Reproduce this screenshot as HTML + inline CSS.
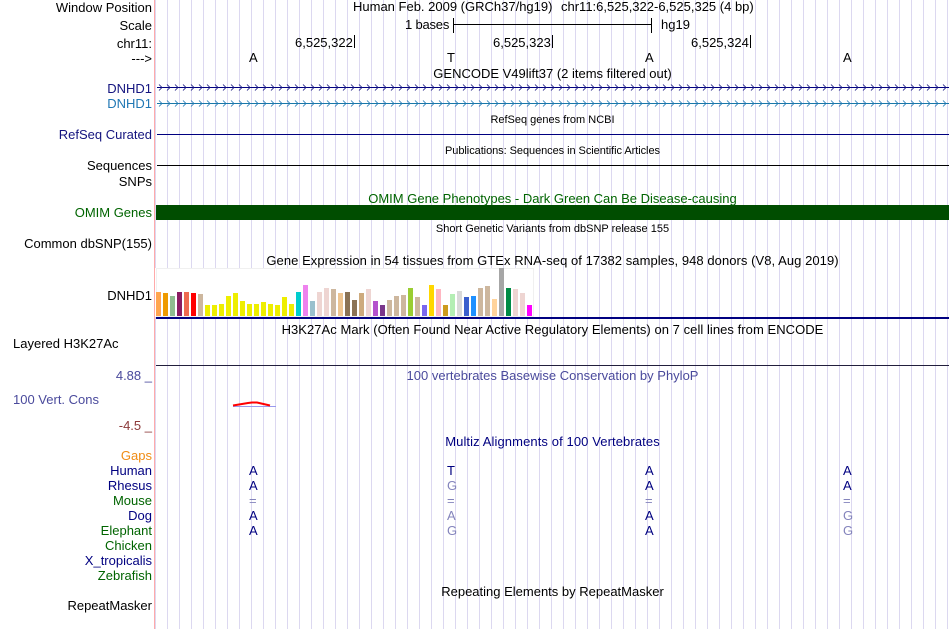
<!DOCTYPE html>
<html><head><meta charset="utf-8"><style>
html,body{margin:0;padding:0;background:#fff;width:950px;height:629px;overflow:hidden}
body{position:relative;font-family:"Liberation Sans",sans-serif;font-size:13px;color:#000}
.t{position:absolute;line-height:14px;white-space:pre}
.l{position:absolute;left:0;width:152px;text-align:right;line-height:14px;white-space:pre}
.c{position:absolute;left:155px;width:795px;text-align:center;line-height:14px;white-space:pre}
.s{font-size:11px}
.b{position:absolute;width:5px;bottom:313px}
.n{color:#000080}.lb{color:#8484bc}
svg{position:absolute;left:0;top:0}
</style></head><body>
<svg width="950" height="629" viewBox="0 0 950 629">
<defs>
<pattern id="v" x="167" y="0" width="12" height="629" patternUnits="userSpaceOnUse"><rect x="0" y="0" width="1" height="629" fill="#dcd8f0"/></pattern>
<pattern id="ch1" x="158" y="83.500" width="8" height="8" patternUnits="userSpaceOnUse"><path d="M1 1 L4 4 L1 7" fill="none" stroke="#14147f" stroke-width="0.800"/></pattern>
<pattern id="ch2" x="158" y="99.500" width="8" height="8" patternUnits="userSpaceOnUse"><path d="M1 1 L4 4 L1 7" fill="none" stroke="#1f77b4" stroke-width="0.800"/></pattern>
</defs>
<rect x="155" y="0" width="794" height="629" fill="url(#v)"/>
<rect x="154" y="0" width="1" height="629" fill="#ffaaaa"/>
<rect x="155" y="268" width="379" height="49" fill="#fff"/>
<rect x="156.500" y="268.500" width="377" height="48" fill="none" stroke="#f0f0f0"/>
<rect x="157" y="87" width="792" height="1" fill="#000080"/>
<rect x="158" y="84" width="791" height="7" fill="url(#ch1)"/>
<rect x="157" y="103" width="792" height="1" fill="#1878a8"/>
<rect x="158" y="100" width="791" height="7" fill="url(#ch2)"/>
<rect x="157" y="134" width="792" height="1" fill="#000080"/>
<rect x="157" y="165" width="792" height="1" fill="#000"/>
<rect x="156" y="205" width="793" height="15" fill="#004d00"/>
<rect x="156" y="317" width="793" height="2" fill="#000080"/>
<rect x="156" y="365" width="793" height="1" fill="#221f3c"/>
<rect x="354" y="35" width="1" height="13" fill="#000"/>
<rect x="552" y="35" width="1" height="13" fill="#000"/>
<rect x="750" y="35" width="1" height="13" fill="#000"/>
<rect x="453" y="18" width="1" height="15" fill="#000"/>
<rect x="651" y="18" width="1" height="15" fill="#000"/>
<rect x="453" y="24" width="198" height="1" fill="#000"/>
<rect x="233" y="406" width="43" height="1" fill="#9a9aee"/>
<path d="M233 405.500 L248 403 L252 402.500 L257 402.500 L270 405.500" fill="none" stroke="#f00" stroke-width="2"/>
</svg>

<div class="l" style="top:1px">Window Position</div>
<div class="l" style="top:19px">Scale</div>
<div class="l" style="top:37px">chr11:</div>
<div class="l" style="top:52px">---&gt;</div>
<div class="l" style="top:82px;color:#14147f">DNHD1</div>
<div class="l" style="top:97px;color:#1f77b4">DNHD1</div>
<div class="l" style="top:128px;color:#14147f">RefSeq Curated</div>
<div class="l" style="top:159px">Sequences</div>
<div class="l" style="top:175px">SNPs</div>
<div class="l" style="top:206px;color:#006400">OMIM Genes</div>
<div class="l" style="top:237px">Common dbSNP(155)</div>
<div class="l" style="top:289px">DNHD1</div>
<div class="t" style="left:13px;top:337px">Layered H3K27Ac</div>
<div class="l" style="top:369px;color:#4a4a9c">4.88 _</div>
<div class="t" style="left:13px;top:393px;color:#4a4a9c">100 Vert. Cons</div>
<div class="l" style="top:419px;color:#8c3a3a">-4.5 _</div>
<div class="l" style="top:449px;color:#f08c14">Gaps</div>
<div class="l n" style="top:464px">Human</div>
<div class="l n" style="top:479px">Rhesus</div>
<div class="l" style="top:494px;color:#006400">Mouse</div>
<div class="l n" style="top:509px">Dog</div>
<div class="l" style="top:524px;color:#006400">Elephant</div>
<div class="l" style="top:539px;color:#006400">Chicken</div>
<div class="l n" style="top:554px">X_tropicalis</div>
<div class="l" style="top:569px;color:#006400">Zebrafish</div>
<div class="l" style="top:599px">RepeatMasker</div>

<div class="t" style="left:353px;top:0">Human Feb. 2009 (GRCh37/hg19)</div>
<div class="t" style="left:561px;top:0">chr11:6,525,322-6,525,325 (4 bp)</div>
<div class="t" style="left:405px;top:18px;letter-spacing:-.2px">1 bases</div>
<div class="t" style="left:661px;top:18px">hg19</div>
<div class="t" style="left:295px;top:36px">6,525,322</div>
<div class="t" style="left:493px;top:36px">6,525,323</div>
<div class="t" style="left:691px;top:36px">6,525,324</div>
<div class="t" style="left:249px;top:51px">A</div>
<div class="t" style="left:447px;top:51px">T</div>
<div class="t" style="left:645px;top:51px">A</div>
<div class="t" style="left:843px;top:51px">A</div>
<div class="c" style="top:67px">GENCODE V49lift37 (2 items filtered out)</div>
<div class="c s" style="top:113px">RefSeq genes from NCBI</div>
<div class="c s" style="top:144px;letter-spacing:-.06px">Publications: Sequences in Scientific Articles</div>
<div class="c" style="top:192px;color:#006400">OMIM Gene Phenotypes - Dark Green Can Be Disease-causing</div>
<div class="c s" style="top:222px">Short Genetic Variants from dbSNP release 155</div>
<div class="c" style="top:254px;letter-spacing:.055px">Gene Expression in 54 tissues from GTEx RNA-seq of 17382 samples, 948 donors (V8, Aug 2019)</div>
<div class="c" style="top:323px;letter-spacing:.05px">H3K27Ac Mark (Often Found Near Active Regulatory Elements) on 7 cell lines from ENCODE</div>
<div class="c" style="top:369px;color:#4a4a9c">100 vertebrates Basewise Conservation by PhyloP</div>
<div class="c n" style="top:435px;letter-spacing:.1px">Multiz Alignments of 100 Vertebrates</div>
<div class="c" style="top:585px">Repeating Elements by RepeatMasker</div>

<div class="t n" style="left:249px;top:464px">A</div>
<div class="t n" style="left:249px;top:479px">A</div>
<div class="t lb" style="left:249px;top:494px">=</div>
<div class="t n" style="left:249px;top:509px">A</div>
<div class="t n" style="left:249px;top:524px">A</div>
<div class="t n" style="left:447px;top:464px">T</div>
<div class="t lb" style="left:447px;top:479px">G</div>
<div class="t lb" style="left:447px;top:494px">=</div>
<div class="t lb" style="left:447px;top:509px">A</div>
<div class="t lb" style="left:447px;top:524px">G</div>
<div class="t n" style="left:645px;top:464px">A</div>
<div class="t n" style="left:645px;top:479px">A</div>
<div class="t lb" style="left:645px;top:494px">=</div>
<div class="t n" style="left:645px;top:509px">A</div>
<div class="t n" style="left:645px;top:524px">A</div>
<div class="t n" style="left:843px;top:464px">A</div>
<div class="t n" style="left:843px;top:479px">A</div>
<div class="t lb" style="left:843px;top:494px">=</div>
<div class="t lb" style="left:843px;top:509px">G</div>
<div class="t lb" style="left:843px;top:524px">G</div>

<div class="b" style="left:156px;height:24px;background:#FFA54F"></div>
<div class="b" style="left:163px;height:23px;background:#EE9A00"></div>
<div class="b" style="left:170px;height:20px;background:#8FBC8F"></div>
<div class="b" style="left:177px;height:24px;background:#8B1C62"></div>
<div class="b" style="left:184px;height:24px;background:#EE6A50"></div>
<div class="b" style="left:191px;height:23px;background:#FF0000"></div>
<div class="b" style="left:198px;height:22px;background:#CDB79E"></div>
<div class="b" style="left:205px;height:11px;background:#EEEE00"></div>
<div class="b" style="left:212px;height:11px;background:#EEEE00"></div>
<div class="b" style="left:219px;height:12px;background:#EEEE00"></div>
<div class="b" style="left:226px;height:20px;background:#EEEE00"></div>
<div class="b" style="left:233px;height:23px;background:#EEEE00"></div>
<div class="b" style="left:240px;height:15px;background:#EEEE00"></div>
<div class="b" style="left:247px;height:12px;background:#EEEE00"></div>
<div class="b" style="left:254px;height:12px;background:#EEEE00"></div>
<div class="b" style="left:261px;height:14px;background:#EEEE00"></div>
<div class="b" style="left:268px;height:12px;background:#EEEE00"></div>
<div class="b" style="left:275px;height:11px;background:#EEEE00"></div>
<div class="b" style="left:282px;height:19px;background:#EEEE00"></div>
<div class="b" style="left:289px;height:12px;background:#EEEE00"></div>
<div class="b" style="left:296px;height:24px;background:#00CDCD"></div>
<div class="b" style="left:303px;height:31px;background:#EE82EE"></div>
<div class="b" style="left:310px;height:15px;background:#9AC0CD"></div>
<div class="b" style="left:317px;height:24px;background:#EED5D2"></div>
<div class="b" style="left:324px;height:28px;background:#EED5D2"></div>
<div class="b" style="left:331px;height:27px;background:#CDB79E"></div>
<div class="b" style="left:338px;height:23px;background:#EEC591"></div>
<div class="b" style="left:345px;height:24px;background:#8B7355"></div>
<div class="b" style="left:352px;height:16px;background:#8B7355"></div>
<div class="b" style="left:359px;height:23px;background:#CDAA7D"></div>
<div class="b" style="left:366px;height:27px;background:#EED5D2"></div>
<div class="b" style="left:373px;height:15px;background:#B452CD"></div>
<div class="b" style="left:380px;height:11px;background:#7A378B"></div>
<div class="b" style="left:387px;height:16px;background:#CDB79E"></div>
<div class="b" style="left:394px;height:20px;background:#CDB79E"></div>
<div class="b" style="left:401px;height:21px;background:#CDB79E"></div>
<div class="b" style="left:408px;height:28px;background:#9ACD32"></div>
<div class="b" style="left:415px;height:19px;background:#CDB79E"></div>
<div class="b" style="left:422px;height:11px;background:#7A67EE"></div>
<div class="b" style="left:429px;height:31px;background:#FFD700"></div>
<div class="b" style="left:436px;height:27px;background:#FFB6C1"></div>
<div class="b" style="left:443px;height:11px;background:#CD9B1D"></div>
<div class="b" style="left:450px;height:22px;background:#B4EEB4"></div>
<div class="b" style="left:457px;height:25px;background:#D9D9D9"></div>
<div class="b" style="left:464px;height:19px;background:#3A5FCD"></div>
<div class="b" style="left:471px;height:20px;background:#1E90FF"></div>
<div class="b" style="left:478px;height:28px;background:#CDB79E"></div>
<div class="b" style="left:485px;height:30px;background:#CDB79E"></div>
<div class="b" style="left:492px;height:17px;background:#FFD39B"></div>
<div class="b" style="left:499px;height:48px;background:#A6A6A6"></div>
<div class="b" style="left:506px;height:28px;background:#008B45"></div>
<div class="b" style="left:513px;height:27px;background:#EED5D2"></div>
<div class="b" style="left:520px;height:23px;background:#EED5D2"></div>
<div class="b" style="left:527px;height:11px;background:#FF00FF"></div>
</body></html>
